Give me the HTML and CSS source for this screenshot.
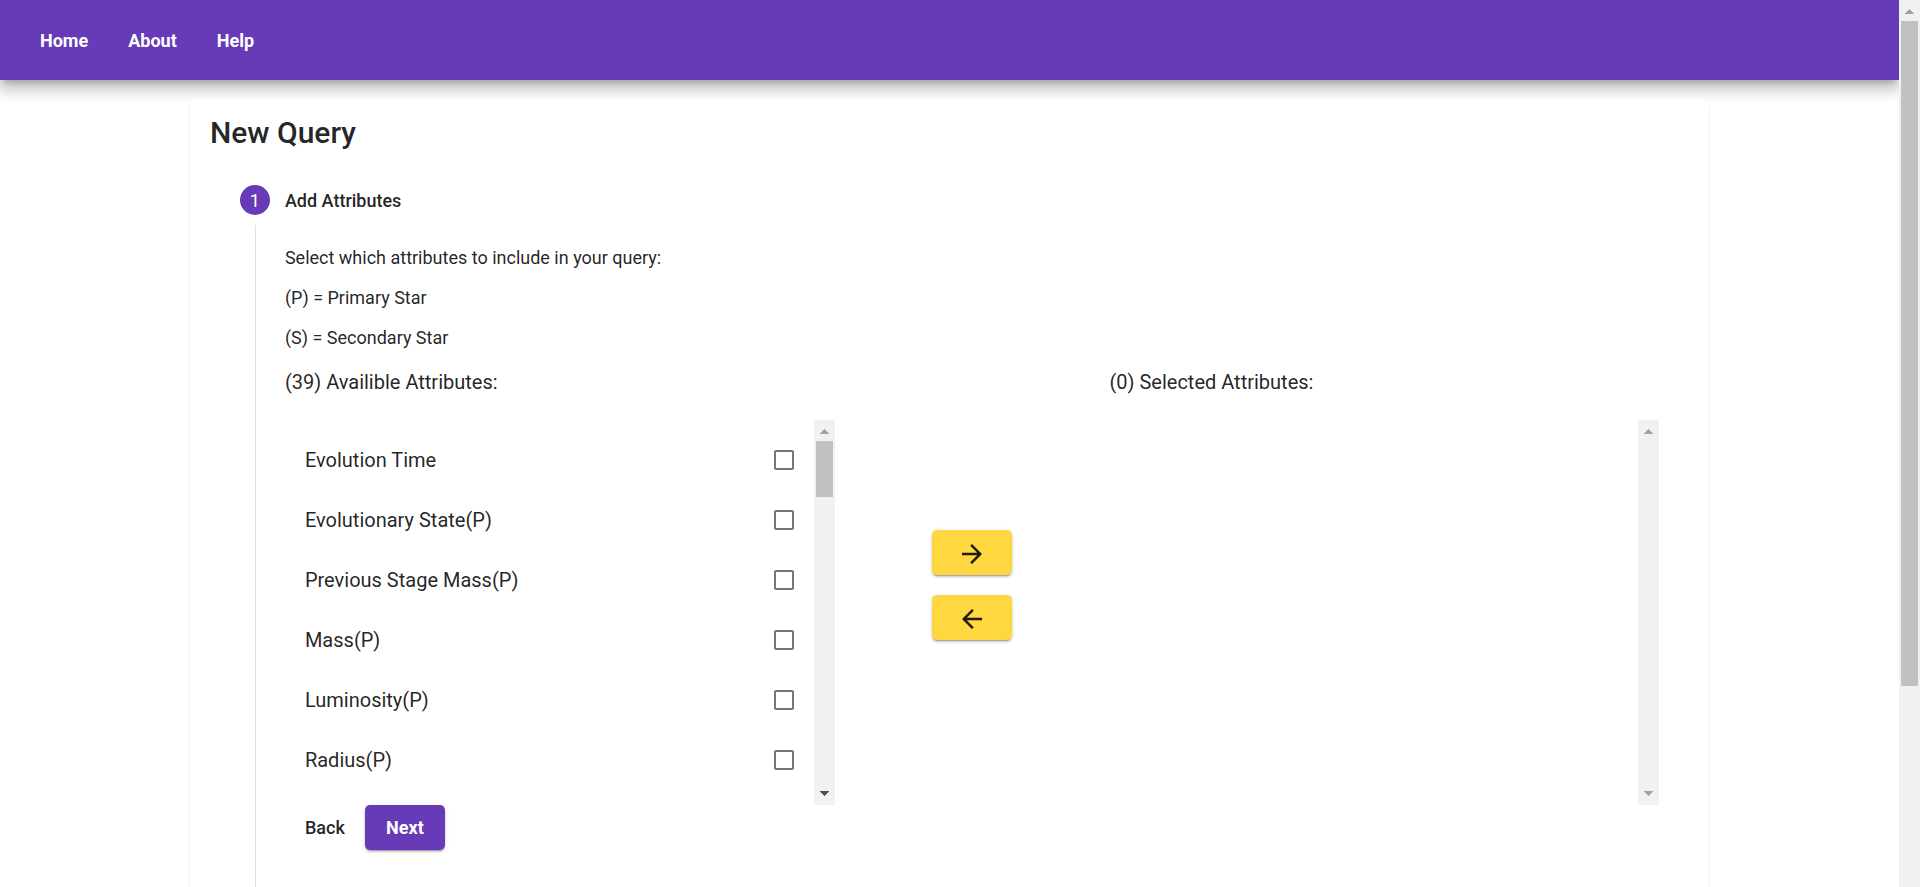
FILE: index.html
```html
<!DOCTYPE html>
<html lang="en">
<head>
<meta charset="utf-8">
<title>New Query</title>
<link rel="stylesheet" href="styles.css">
</head>
<body>
<div class="viewport">
  <div class="page">
    <header class="toolbar">
      <nav class="nav">
        <a class="nav-link" href="#home">Home</a>
        <a class="nav-link" href="#about">About</a>
        <a class="nav-link" href="#help">Help</a>
      </nav>
    </header>
    <main class="card">
      <h1 class="title">New Query</h1>
      <section class="step">
        <div class="step-header">
          <span class="step-number">1</span>
          <h2 class="step-label">Add Attributes</h2>
        </div>
        <div class="step-body">
          <p class="hint">Select which attributes to include in your query:</p>
          <p class="hint">(P) = Primary Star</p>
          <p class="hint">(S) = Secondary Star</p>
          <div class="picker">
            <section class="column">
              <h3 class="column-title">(39) Availible Attributes:</h3>
              <div class="list">
                <div class="options">
                  <label class="option">Evolution Time<input class="check" type="checkbox"></label>
                  <label class="option">Evolutionary State(P)<input class="check" type="checkbox"></label>
                  <label class="option">Previous Stage Mass(P)<input class="check" type="checkbox"></label>
                  <label class="option">Mass(P)<input class="check" type="checkbox"></label>
                  <label class="option">Luminosity(P)<input class="check" type="checkbox"></label>
                  <label class="option">Radius(P)<input class="check" type="checkbox"></label>
                </div>
                <div class="scrollbar">
                  <svg class="arrow" viewBox="0 0 9 5" shape-rendering="crispEdges"><path d="M4.500 0L9 5H0z"/></svg>
                  <div class="track"><div class="thumb thumb-list"></div></div>
                  <svg class="arrow arrow-active" viewBox="0 0 9 5" shape-rendering="crispEdges"><path d="M0 0H9L4.500 5z"/></svg>
                </div>
              </div>
            </section>
            <div class="moves">
              <button class="button button-accent" type="button" aria-label="Add to selected">
                <svg class="icon" viewBox="0 0 24 24"><path d="M12 4l-1.410 1.410L16.170 11H4v2h12.170l-5.580 5.590L12 20l8-8z"/></svg>
              </button>
              <button class="button button-accent" type="button" aria-label="Remove from selected">
                <svg class="icon" viewBox="0 0 24 24"><path d="M20 11H7.830l5.590-5.590L12 4l-8 8 8 8 1.410-1.410L7.830 13H20v-2z"/></svg>
              </button>
            </div>
            <section class="column">
              <h3 class="column-title">(0) Selected Attributes:</h3>
              <div class="list">
                <div class="options"></div>
                <div class="scrollbar">
                  <svg class="arrow" viewBox="0 0 9 5" shape-rendering="crispEdges"><path d="M4.500 0L9 5H0z"/></svg>
                  <div class="track"></div>
                  <svg class="arrow" viewBox="0 0 9 5" shape-rendering="crispEdges"><path d="M0 0H9L4.500 5z"/></svg>
                </div>
              </div>
            </section>
          </div>
          <div class="actions">
            <button class="button button-plain" type="button">Back</button>
            <button class="button button-primary" type="button">Next</button>
          </div>
        </div>
      </section>
    </main>
  </div>
  <div class="scrollbar">
    <svg class="arrow" viewBox="0 0 9 5" shape-rendering="crispEdges"><path d="M4.500 0L9 5H0z"/></svg>
    <div class="track"><div class="thumb thumb-page"></div></div>
  </div>
</div>
</body>
</html>
```

FILE: styles.css
```css
* { box-sizing: border-box; }

body {
  margin: 0;
  background: #fff;
  color: rgba(0, 0, 0, 0.87);
  font-family: Roboto, "Liberation Sans", sans-serif;
  font-size: 18px;
  line-height: 20px;
}

h1, h2, h3, p { margin: 0; }

.viewport {
  display: flex;
  height: 100vh;
  overflow: hidden;
}

.page {
  flex: 1;
  min-width: 0;
  display: flex;
  flex-direction: column;
  overflow: hidden;
}

.toolbar {
  flex: none;
  display: flex;
  align-items: center;
  height: 80px;
  padding: 2px 20px 0;
  background: #673ab7;
  box-shadow: 0 6px 6px -4px rgba(0, 0, 0, 0.2), 0 10px 12px 1px rgba(0, 0, 0, 0.14), 0 4px 18px 3px rgba(0, 0, 0, 0.12);
}

.nav { display: flex; }

.nav-link {
  padding: 0 20px;
  color: #fff;
  font-weight: 700;
  text-decoration: none;
}

.card {
  flex: 1 0 auto;
  width: 80%;
  margin: 20px auto 0;
  padding: 13px 20px 20px;
  border-radius: 5px;
  background: #fff;
  box-shadow: 0 3px 1px -1px rgba(0, 0, 0, 0.2), 0 1px 1px rgba(0, 0, 0, 0.14), 0 2px 2px rgba(0, 0, 0, 0.12);
}

.title {
  font-size: 30px;
  line-height: 40px;
  font-weight: 500;
}

.step { padding: 32px 30px 0; }

.step-header {
  display: flex;
  align-items: center;
  gap: 15px;
}

.step-number {
  display: grid;
  place-items: center;
  width: 30px;
  height: 30px;
  padding-top: 1px;
  border-radius: 50%;
  background: #673ab7;
  color: #fff;
}

.step-label {
  padding-top: 2px;
  font-size: 18px;
  font-weight: 500;
}

.step-body {
  margin: 10px 0 0 15px;
  padding: 23px 0 90px 29px;
  border-left: 1px solid #e0e0e0;
}

.hint { margin-bottom: 20px; }

.picker { display: flex; }

.column { flex: 2; min-width: 0; }

.column-title {
  margin: 4px 0 28px;
  font-size: 20px;
  line-height: 20px;
  font-weight: 400;
}

.list {
  display: flex;
  height: 385px;
}

.options {
  flex: 1;
  padding-top: 10px;
  overflow-y: auto;
  scrollbar-width: none;
}

.option {
  display: flex;
  align-items: center;
  justify-content: space-between;
  height: 60px;
  padding: 0 20px;
  font-size: 20px;
}

.check {
  appearance: none;
  width: 20px;
  height: 20px;
  margin: 0;
  border: 2px solid #757575;
  border-radius: 2px;
}

.check:checked { border-color: #ffd740; background: #ffd740; }

.scrollbar {
  flex: none;
  display: flex;
  flex-direction: column;
  width: 21px;
  background: #f1f1f1;
}

.arrow {
  flex: none;
  width: 9px;
  height: 5px;
  margin: 9px 6px 7px;
  fill: #a3a3a3;
}

.arrow:last-child { margin: 7px 6px 9px; }

.arrow-active { fill: #505050; }

.track {
  flex: 1;
  padding: 0 2px;
}

.thumb { background: #c1c1c1; }

.thumb-list { height: 56px; }

.thumb-page { height: 665px; }

.moves {
  flex: 1;
  display: flex;
  flex-direction: column;
  align-items: center;
  gap: 20px;
  padding-top: 162px;
}

.button {
  display: flex;
  align-items: center;
  justify-content: center;
  min-width: 80px;
  height: 45px;
  padding: 0 20px;
  border: 0;
  border-radius: 5px;
  font: inherit;
  font-weight: 500;
  color: rgba(0, 0, 0, 0.87);
  background: transparent;
}

.button-accent,
.button-primary {
  box-shadow: 0 3px 1px -2px rgba(0, 0, 0, 0.2), 0 2px 2px rgba(0, 0, 0, 0.14), 0 1px 5px rgba(0, 0, 0, 0.12);
}

.button-accent {
  padding-top: 2px;
  background: #ffd740;
}

.button-primary {
  background: #673ab7;
  color: #fff;
  font-weight: 700;
}

.icon {
  width: 30px;
  height: 30px;
  fill: currentColor;
}

.actions { display: flex; }
```
